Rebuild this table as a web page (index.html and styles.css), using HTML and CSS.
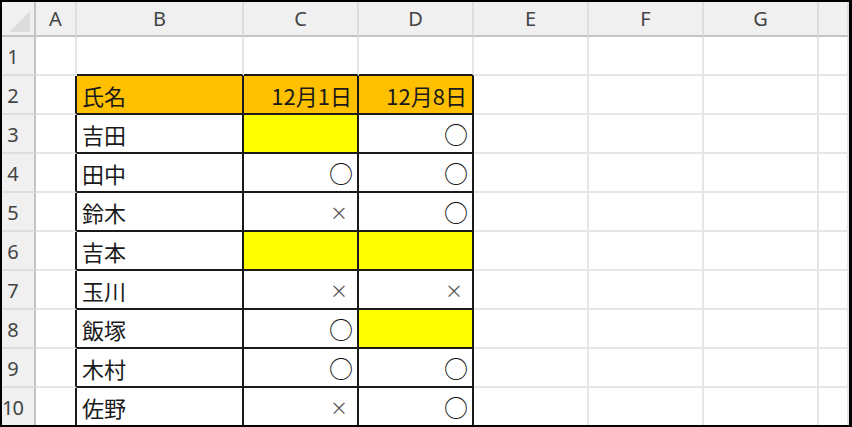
FILE: index.html
```html
<!DOCTYPE html>
<html lang="ja">
<head>
<meta charset="utf-8">
<title>出欠表</title>
<link rel="stylesheet" href="styles.css">
</head>
<body>
<div class="frame">
  <div class="sheet">
    <div class="corner"><div class="tri"></div></div>
    <div class="hd">A</div>
    <div class="hd">B</div>
    <div class="hd">C</div>
    <div class="hd">D</div>
    <div class="hd">E</div>
    <div class="hd">F</div>
    <div class="hd">G</div>
    <div class="hd"></div>

    <div class="rh">1</div>
    <div class="c"></div>
    <div class="c tt"></div>
    <div class="c tt"></div>
    <div class="c tt"></div>
    <div class="c"></div>
    <div class="c"></div>
    <div class="c"></div>
    <div class="c"></div>

    <div class="rh">2</div>
    <div class="c tl"></div>
    <div class="c t org">氏名</div>
    <div class="c t org r">12月1日</div>
    <div class="c t org r">12月8日</div>
    <div class="c"></div>
    <div class="c"></div>
    <div class="c"></div>
    <div class="c"></div>

    <div class="rh">3</div>
    <div class="c tl"></div>
    <div class="c t">吉田</div>
    <div class="c t yel r"></div>
    <div class="c t r"><span class="o">○</span></div>
    <div class="c"></div>
    <div class="c"></div>
    <div class="c"></div>
    <div class="c"></div>

    <div class="rh">4</div>
    <div class="c tl"></div>
    <div class="c t">田中</div>
    <div class="c t r"><span class="o">○</span></div>
    <div class="c t r"><span class="o">○</span></div>
    <div class="c"></div>
    <div class="c"></div>
    <div class="c"></div>
    <div class="c"></div>

    <div class="rh">5</div>
    <div class="c tl"></div>
    <div class="c t">鈴木</div>
    <div class="c t r"><span class="x">×</span></div>
    <div class="c t r"><span class="o">○</span></div>
    <div class="c"></div>
    <div class="c"></div>
    <div class="c"></div>
    <div class="c"></div>

    <div class="rh">6</div>
    <div class="c tl"></div>
    <div class="c t">吉本</div>
    <div class="c t yel r"></div>
    <div class="c t yel r"></div>
    <div class="c"></div>
    <div class="c"></div>
    <div class="c"></div>
    <div class="c"></div>

    <div class="rh">7</div>
    <div class="c tl"></div>
    <div class="c t">玉川</div>
    <div class="c t r"><span class="x">×</span></div>
    <div class="c t r"><span class="x">×</span></div>
    <div class="c"></div>
    <div class="c"></div>
    <div class="c"></div>
    <div class="c"></div>

    <div class="rh">8</div>
    <div class="c tl"></div>
    <div class="c t">飯塚</div>
    <div class="c t r"><span class="o">○</span></div>
    <div class="c t yel r"></div>
    <div class="c"></div>
    <div class="c"></div>
    <div class="c"></div>
    <div class="c"></div>

    <div class="rh">9</div>
    <div class="c tl"></div>
    <div class="c t">木村</div>
    <div class="c t r"><span class="o">○</span></div>
    <div class="c t r"><span class="o">○</span></div>
    <div class="c"></div>
    <div class="c"></div>
    <div class="c"></div>
    <div class="c"></div>

    <div class="rh">10</div>
    <div class="c tl"></div>
    <div class="c t">佐野</div>
    <div class="c t r"><span class="x">×</span></div>
    <div class="c t r"><span class="o">○</span></div>
    <div class="c"></div>
    <div class="c"></div>
    <div class="c"></div>
    <div class="c"></div>
  </div>
</div>
</body>
</html>
```

FILE: styles.css
```css
html, body {
  margin: 0;
  padding: 0;
  background: #ffffff;
}

.frame {
  width: 852px;
  height: 427px;
  box-sizing: border-box;
  border: 2px solid #000000;
  border-right-width: 3px;
  overflow: hidden;
  background: #ffffff;
}

.sheet {
  display: grid;
  grid-template-columns: 34px 41px 167px 115px 115px 115px 115px 115px 1fr;
  grid-template-rows: 35px repeat(10, 39px);
}

.sheet > div {
  box-sizing: border-box;
  min-width: 0;
  overflow: hidden;
}

.corner {
  background: #f0f0f0;
  border-right: 2px solid #c4c4c4;
  border-bottom: 2px solid #c4c4c4;
  display: flex;
  justify-content: flex-end;
  align-items: flex-end;
  padding: 0 4px 3px 0;
}

.tri {
  width: 21px;
  height: 21px;
  background: #dcdcdc;
  clip-path: polygon(100% 0, 100% 100%, 0 100%);
}

.hd {
  background: #f0f0f0;
  border-right: 2px solid #dedede;
  border-bottom: 2px solid #c4c4c4;
  display: flex;
  align-items: center;
  justify-content: center;
  font-family: "Noto Sans", "Open Sans", sans-serif;
  font-size: 20px;
  color: #444444;
  line-height: 1;
}

.rh {
  background: #f0f0f0;
  border-right: 2px solid #c4c4c4;
  border-bottom: 2px solid #dedede;
  display: flex;
  align-items: center;
  justify-content: center;
  padding-right: 11px;
  padding-top: 2px;
  font-family: "Noto Sans", "Open Sans", sans-serif;
  font-size: 20px;
  color: #444444;
  line-height: 1;
  letter-spacing: -1px;
}

.c {
  border-right: 2px solid #e6e6e6;
  border-bottom: 2px solid #e6e6e6;
  display: flex;
  align-items: center;
  padding: 0 5px;
  font-family: "Noto Sans CJK JP", "Noto Sans", sans-serif;
  font-size: 22px;
  color: #1a1a1a;
  line-height: 1;
  white-space: nowrap;
}

.t {
  border-right-color: #1a1a1a;
  border-bottom-color: #1a1a1a;
}

.tt {
  border-bottom-color: #1a1a1a;
}

.tl {
  border-right-color: #1a1a1a;
}

.r {
  justify-content: flex-end;
}

.org {
  background: #ffc000;
}

.yel {
  background: #ffff00;
}

.o {
  font-size: 24px;
  color: #111111;
  margin-right: -1px;
}

.x {
  font-size: 18px;
  color: #555555;
  padding-right: 4px;
}
```
